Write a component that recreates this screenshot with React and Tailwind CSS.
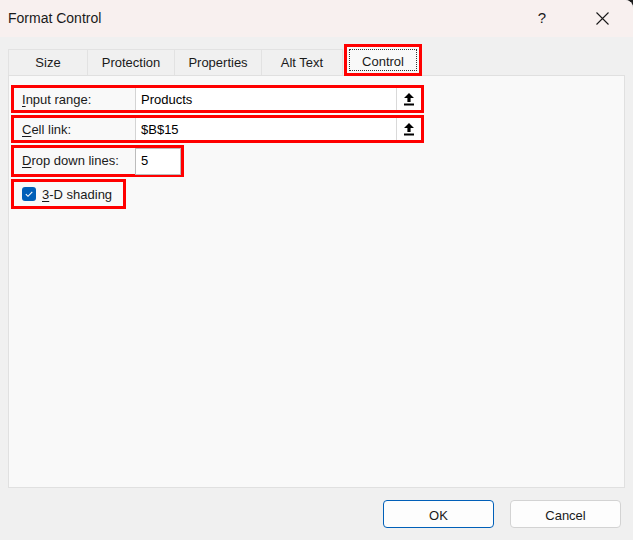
import React from 'react';

const tabs = [
    { name: 'Size', w: 'w-[80px]' },
    { name: 'Protection', w: 'w-[87px]' },
    { name: 'Properties', w: 'w-[87px]' },
    { name: 'Alt Text', w: 'w-[81px]' },
];

const UploadIcon = () => (
    <svg width="12" height="14" viewBox="0 0 12 14">
        <path d="M6 1 L11 6 H7.6 V10 H4.4 V6 H1 Z" fill="#000" />
        <rect x="1" y="11.5" width="10" height="2" fill="#000" />
    </svg>
);

const Field = ({ label, accel, value }) => {
    const rest = label.slice(1);
    return (
        <div className="flex h-[28px] w-[413px] border-[3px] border-[#ff0000]">
            <div className="flex w-[121px] items-center pl-[8px] pt-px text-[13px] text-[#1a1a1a]">
                <span className="underline underline-offset-2">{accel}</span>
                {rest}
            </div>
            <div className="flex flex-1 items-center bg-white border-l border-[#d4d4d4]">
                <span className="flex-1 pl-[5px] pt-px text-[13px] text-black">{value}</span>
                <div className="flex h-full w-[25px] items-center justify-center border-l border-[#d9d9d9]">
                    <UploadIcon />
                </div>
            </div>
        </div>
    );
};

const App = () => {
    return (
        <div className="h-[540px] w-[633px] bg-[#1c1c1c]" style={{ fontFamily: '"Liberation Sans", Arial, sans-serif' }}>
            <div className="flex h-full w-full flex-col overflow-hidden rounded-tr-[8px] bg-[#f0f0f0]">
                {/* title bar */}
                <div className="flex h-[37px] items-center bg-[#f8f0ef] pl-[8px]">
                    <span className="flex-1 text-[14px] text-[#1a1a1a]">Format Control</span>
                    <span className="mr-[50px] text-[15px] text-[#1a1a1a]">?</span>
                    <svg width="13" height="13" viewBox="0 0 13 13" className="mr-[24px]">
                        <path d="M0.5 0.5 L12.5 12.5 M12.5 0.5 L0.5 12.5" stroke="#1a1a1a" strokeWidth="1.1" />
                    </svg>
                </div>

                {/* tabs */}
                <div className="mt-[7px] flex items-end pl-[8px]">
                    {tabs.map((t) => (
                        <div
                            key={t.name}
                            className={`flex h-[26px] ${t.w} items-center justify-center border-t border-r border-[#e2e2e2] first:border-l text-[13px] text-[#1a1a1a]`}
                        >
                            {t.name}
                        </div>
                    ))}
                    <div className="relative z-10 -mb-px ml-px flex h-[32px] w-[78px] items-center justify-center border-[3px] border-[#ff0000] bg-[#f9f9f9] p-[2px]">
                        <div className="flex h-full w-full items-center justify-center border border-dotted border-[#333] pt-[3px] text-[13px] text-[#1a1a1a]">
                            Control
                        </div>
                    </div>
                </div>

                {/* panel */}
                <div className="mx-[8px] flex flex-1 flex-col gap-[2px] border border-[#e0e0e0] bg-[#f9f9f9] pl-[2px] pt-[9px]">
                    <Field label="Input range:" accel="I" value="Products" />
                    <Field label="Cell link:" accel="C" value="$B$15" />
                    <div className="flex h-[32px] w-[173px] items-center border-[3px] border-[#ff0000]">
                        <div className="flex w-[121px] items-center pl-[8px] text-[13px] text-[#1a1a1a]">
                            <span className="underline underline-offset-2">D</span>rop down lines:
                        </div>
                        <div className="flex h-[27px] w-[46px] items-center border border-[#bcbcbc] bg-white pl-[5px] text-[13px] text-black">
                            5
                        </div>
                    </div>
                    <div className="flex h-[30px] w-[115px] items-center border-[3px] border-[#ff0000] pl-[8px]">
                        <div className="flex h-[14px] w-[14px] items-center justify-center rounded-[3px] bg-[#005fb8]">
                            <svg width="10" height="10" viewBox="0 0 10 10">
                                <path d="M1.8 5.2 L4 7.3 L8.3 2.8" stroke="#fff" strokeWidth="1.1" fill="none" />
                            </svg>
                        </div>
                        <span className="ml-[6px] pt-px text-[13px] text-[#1a1a1a]">
                            <span className="underline underline-offset-2">3</span>-D shading
                        </span>
                    </div>
                </div>

                {/* footer */}
                <div className="flex h-[52px] items-start justify-end gap-[16px] pr-[12px] pt-[12px]">
                    <button className="h-[28px] w-[111px] rounded-[4px] border border-[#005fb8] bg-[#fdfdfd] pt-[3px] text-[13px] text-[#1a1a1a]">
                        OK
                    </button>
                    <button className="h-[28px] w-[111px] rounded-[4px] border border-[#d3d3d3] bg-[#fdfdfd] pt-[3px] text-[13px] text-[#1a1a1a]">
                        Cancel
                    </button>
                </div>
            </div>
        </div>
    );
};

export default App;
